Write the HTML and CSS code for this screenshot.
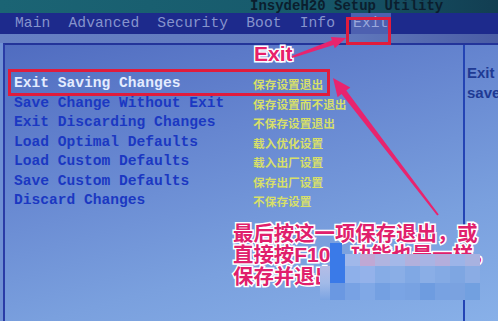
FILE: index.html
```html
<!DOCTYPE html>
<html>
<head>
<meta charset="utf-8">
<link rel="stylesheet" href="styles.css">
</head>
<body>
<div class="shot">
  <div class="topbar"><span class="title">InsydeH20 Setup Utility</span></div>
  <div class="menubar">
    <span class="menu-item">Main</span>
    <span class="menu-item">Advanced</span>
    <span class="menu-item">Security</span>
    <span class="menu-item">Boot</span>
    <span class="menu-item">Info</span>
    <span class="menu-item active">Exit</span>
  </div>
  <div class="strip"></div>
  <div class="frame">
    <div class="main">
      <div class="row selected"><span class="en">Exit Saving Changes</span><span class="zh">保存设置退出</span></div>
      <div class="row"><span class="en">Save Change Without Exit</span><span class="zh">保存设置而不退出</span></div>
      <div class="row"><span class="en">Exit Discarding Changes</span><span class="zh">不保存设置退出</span></div>
      <div class="row"><span class="en">Load Optimal Defaults</span><span class="zh">载入优化设置</span></div>
      <div class="row"><span class="en">Load Custom Defaults</span><span class="zh">载入出厂设置</span></div>
      <div class="row"><span class="en">Save Custom Defaults</span><span class="zh">保存出厂设置</span></div>
      <div class="row"><span class="en">Discard Changes</span><span class="zh">不保存设置</span></div>
    </div>
    <div class="side">
      <div class="side-line">Exit</div>
      <div class="side-line">save</div>
    </div>
  </div>

  <div class="box box-row"></div>
  <div class="box box-exit"></div>
  <div class="label-exit">Exit</div>
  <svg class="arrows" width="498" height="321" viewBox="0 0 498 321">
    <polygon fill="#e8246e" points="438.8,214.4 346.3,90.5 350.3,87.4 333,78 337.6,97.2 341.5,94.1 437.2,215.6"/>
    <polygon fill="#e8246e" points="292.3,57.9 333.6,45 334.8,48.3 346,38 330.8,37 332,40.3 291.7,56.1"/>
  </svg>
  <div class="note">
    <div>最后按这一项保存退出，或</div>
    <div>直接按<span class="key">F10</span>，功能也是一样，</div>
    <div>保存并退出。</div>
  </div>
  <div class="mosaic-top"></div>
  <div class="mosaic-left"></div>
  <div class="mosaic">
    <i class="a0"></i><i class="a1"></i><i class="a2"></i><i class="a3"></i><i class="a4"></i><i class="a5"></i><i class="a6"></i><i class="a7"></i><i class="a8"></i><i class="a9"></i>
    <i class="b0"></i><i class="b1"></i><i class="b2"></i><i class="b3"></i><i class="b4"></i><i class="b5"></i><i class="b6"></i><i class="b7"></i><i class="b8"></i><i class="b9"></i>
    <i class="c0"></i><i class="c1"></i><i class="c2"></i><i class="c3"></i><i class="c4"></i><i class="c5"></i><i class="c6"></i><i class="c7"></i><i class="c8"></i><i class="c9"></i>
  </div>
</div>
</body>
</html>
```

FILE: styles.css
```css
html, body {
  margin: 0;
  padding: 0;
  background: #6f90d4;
}
.shot {
  position: relative;
  width: 498px;
  height: 321px;
  overflow: hidden;
  display: flex;
  flex-direction: column;
  font-family: "Liberation Mono", "DejaVu Sans Mono", monospace;
}
.topbar {
  height: 13px;
  flex: none;
  background: linear-gradient(90deg, #1b6474 0%, #175a6c 60%, #123e52 100%);
  overflow: hidden;
}
.title {
  display: block;
  margin-left: 250px;
  font-size: 14px;
  font-weight: bold;
  line-height: 13px;
  color: #0b1e2e;
}
.menubar {
  height: 21px;
  flex: none;
  background: #1d2a8c;
  display: flex;
  align-items: center;
  padding-left: 15px;
  gap: 18px;
  font-size: 14.6px;
  letter-spacing: 0.1px;
  color: #8694cc;
}
.menu-item {
  line-height: 21px;
}
.menu-item.active {
  background: #4d60b0;
  color: #9aa8dc;
  margin-left: -2px;
  padding: 0 2px;
}
.strip {
  height: 9px;
  flex: none;
  background: linear-gradient(90deg, #6680c4, #6078bc 70%, #4a5ca4);
}
.frame {
  flex: 1;
  display: flex;
  margin-left: 3px;
  border-top: 2px solid #23349a;
  border-left: 2px solid #2a3ca6;
  background: linear-gradient(165deg, #506cc0 0%, #6686d0 35%, #7aa0de 70%, #88b0e8 100%);
}
.main {
  width: 458px;
  flex: none;
  padding-top: 29px;
  padding-left: 9px;
  box-sizing: border-box;
}
.row {
  display: flex;
  height: 19.5px;
  line-height: 19.5px;
  align-items: center;
}
.en {
  width: 239px;
  flex: none;
  font-size: 14.6px;
  font-weight: bold;
  color: #1b38c2;
  white-space: nowrap;
}
.row.selected .en {
  color: #e4ecff;
}
.zh {
  font-family: "Noto Sans CJK SC", sans-serif;
  font-size: 11.7px;
  font-weight: bold;
  color: #d6df6a;
  white-space: nowrap;
}
.side {
  flex: 1;
  border-left: 2px solid #2444b4;
  padding-left: 2px;
  padding-top: 18px;
  font-family: "Liberation Sans", Arial, sans-serif;
  font-size: 15px;
  font-weight: bold;
  line-height: 20px;
  color: #1f3a94;
  white-space: nowrap;
  overflow: hidden;
}
.box {
  position: absolute;
  box-sizing: border-box;
  border: 3px solid #e01c3c;
}
.box-row {
  left: 8px;
  top: 69px;
  width: 322px;
  height: 27px;
}
.box-exit {
  left: 346px;
  top: 17px;
  width: 45px;
  height: 28px;
}
.label-exit {
  position: absolute;
  left: 254px;
  top: 43px;
  font-family: "Liberation Sans", Arial, sans-serif;
  font-size: 21px;
  font-weight: bold;
  line-height: 21px;
  color: #e8206a;
  -webkit-text-stroke: 3px #ffffff;
  paint-order: stroke fill;
}
.arrows {
  position: absolute;
  left: 0;
  top: 0;
}
.note {
  position: absolute;
  left: 233px;
  top: 222px;
  font-family: "Noto Sans CJK SC", sans-serif;
  font-size: 20.4px;
  font-weight: bold;
  line-height: 21px;
  color: #e0206c;
  white-space: nowrap;
  -webkit-text-stroke: 3px #ffffff;
  paint-order: stroke fill;
}
.key {
  font-family: "Liberation Sans", Arial, sans-serif;
  font-size: 21px;
}
.mosaic-top {
  position: absolute;
  left: 330px;
  top: 243px;
  width: 12px;
  height: 11px;
  background: #3a7ae8;
}
.mosaic-left {
  position: absolute;
  left: 320px;
  top: 266px;
  width: 10px;
  height: 34px;
  background: linear-gradient(180deg, #b4bce6 0%, #a2bae8 50%, #7ca4e2 100%);
}
.mosaic {
  position: absolute;
  left: 330px;
  top: 254px;
  width: 150px;
  height: 46px;
  display: grid;
  grid-template-columns: repeat(10, 1fr);
  grid-template-rows: 12px 17px 17px;
}
.mosaic i {
  display: block;
}
.a0 { background: #3a7ae8; }
.a1 { background: #a0b8ea; }
.a2 { background: #c0a8d4; }
.a3 { background: #b0b4e0; }
.a4 { background: #a4b8e8; }
.a5 { background: #b2b0dc; }
.a6 { background: #a8b4e4; }
.a7 { background: #b4aedc; }
.a8 { background: #9cb4e8; }
.a9 { background: #a8b2e0; }
.b0 { background: #3a7ae8; }
.b1 { background: #8eb0ea; }
.b2 { background: #94b2ea; }
.b3 { background: #86ace6; }
.b4 { background: #8aaee6; }
.b5 { background: #80a8e4; }
.b6 { background: #8aaee6; }
.b7 { background: #84aae4; }
.b8 { background: #7ea6e2; }
.b9 { background: #8aace4; }
.c0 { background: #6a98e2; }
.c1 { background: #78a2e4; }
.c2 { background: #80a8e6; }
.c3 { background: #74a0e2; }
.c4 { background: #7aa4e4; }
.c5 { background: #78a2e2; }
.c6 { background: #6e9ce0; }
.c7 { background: #78a2e2; }
.c8 { background: #7aa2e0; }
.c9 { background: #72a0e0; }
```
